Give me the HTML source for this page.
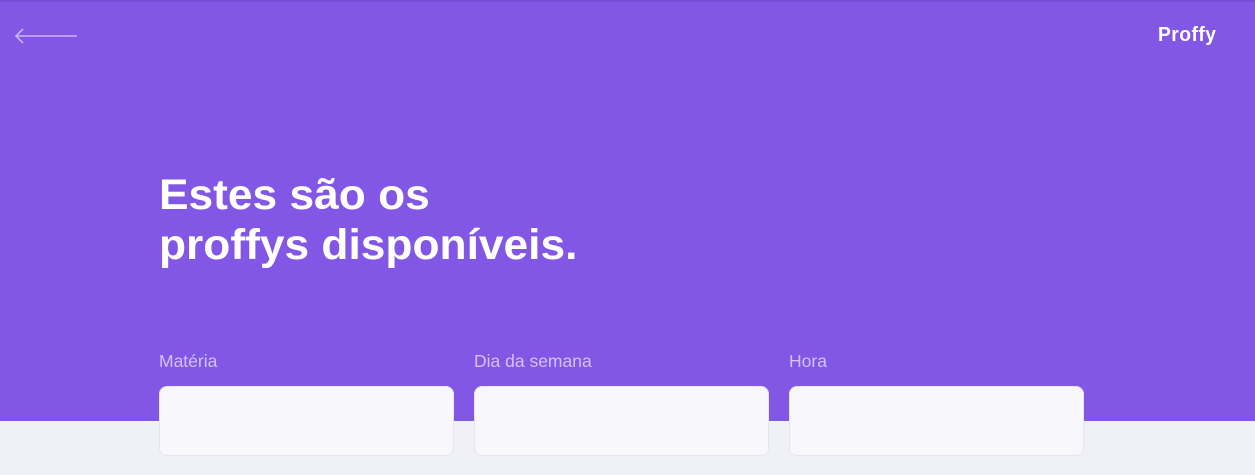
<!DOCTYPE html>
<html><head><meta charset="utf-8"><style>
*{margin:0;padding:0;box-sizing:border-box}
body{width:1255px;height:475px;overflow:hidden;background:#f0f0f7;font-family:"Liberation Sans",sans-serif;position:relative}
.top{position:absolute;left:0;top:0;width:1255px;height:421px;background:#8257e5;border-top:2px solid #774dd6}
.logo{position:absolute;left:1158px;top:24px;color:#fff;font-weight:bold;font-size:20px;letter-spacing:0.5px;transform:scaleX(0.96);transform-origin:left}
h1{position:absolute;left:159px;top:170px;color:#fff;font-size:43px;line-height:50px;font-weight:bold;transform:scaleX(1.03);transform-origin:left}
.lab{position:absolute;top:351px;color:#d4c2ff;font-size:17.5px}
.box{position:absolute;top:386px;width:295px;height:70px;background:#f8f8fc;border:1px solid #e6e6f0;border-radius:8px}
</style></head><body>
<div class="top"></div>
<svg style="position:absolute;left:14px;top:28px" width="64" height="16"><path d="M2 8H63M9 1L2 8L9 15" stroke="#c9b5ff" stroke-width="1.6" fill="none"/></svg>
<div class="logo">Proffy</div>
<h1>Estes são os<br>proffys disponíveis.</h1>
<div class="lab" style="left:159px">Matéria</div>
<div class="lab" style="left:474px">Dia da semana</div>
<div class="lab" style="left:789px">Hora</div>
<div class="box" style="left:159px"></div>
<div class="box" style="left:474px"></div>
<div class="box" style="left:789px"></div>
</body></html>
